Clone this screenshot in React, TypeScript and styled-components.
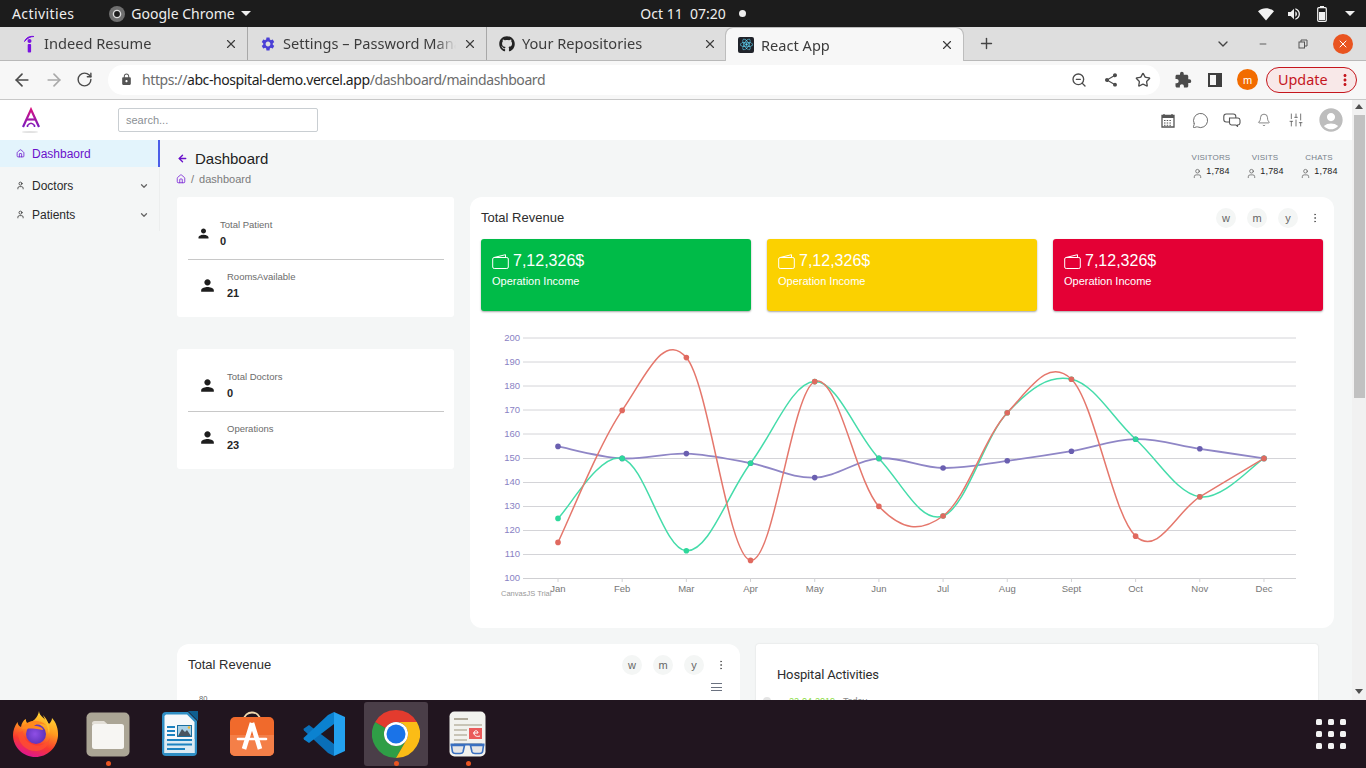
import React from "react";
import styled, { createGlobalStyle } from "styled-components";
import { ArrowLeft, ArrowRight, Bell, ChevronDown, Home, MessageCircle, Minus, MoreVertical, Plus, RotateCw, SlidersVertical, Star, User, X, ZoomOut } from "lucide-react";
import { FaGithub, FaReact } from "react-icons/fa";
import { MdAccountCircle, MdExtension, MdLock, MdMoreVert, MdPerson, MdSettings, MdShare, MdVolumeUp } from "react-icons/md";

const GlobalStyle = createGlobalStyle`
  html, body { margin: 0; padding: 0; height: 100%; overflow: hidden; }
  body { font-family: "Liberation Sans", Arial, sans-serif; color: #222; }
  * { box-sizing: border-box; }
`;

const Screen = styled.div`
  width: 1366px;
  height: 768px;
  display: flex;
  flex-direction: column;
  overflow: hidden;
`;

/* ---------- gnome top bar ---------- */
const TopBar = styled.div`
  height: 27px;
  flex: none;
  background: #1c1c1c;
  color: #eee;
  font-family: "Noto Sans", sans-serif;
  font-size: 14px;
  display: grid;
  grid-template-columns: 1fr auto 1fr;
  align-items: center;
  padding: 0 2px 0 12px;
`;
const BarLeft = styled.div`
  display: flex;
  align-items: center;
`;
const ActivitiesLabel = styled.span`
  letter-spacing: 0.4px;
`;
const AppMenu = styled.div`
  display: flex;
  align-items: center;
  gap: 6px;
  margin-left: 35px;
`;
const Clock = styled.div`
  display: flex;
  align-items: center;
  gap: 13px;
  margin-left: 10px;
`;
const ClockDot = styled.span`
  width: 7px;
  height: 7px;
  border-radius: 50%;
  background: #eee;
`;
const BarRight = styled.div`
  display: flex;
  align-items: center;
  justify-content: flex-end;
`;
const TraySlot = styled.span`
  width: 28px;
  display: flex;
  justify-content: center;
`;
const Caret = styled.span`
  width: 0;
  height: 0;
  border-left: 5px solid transparent;
  border-right: 5px solid transparent;
  border-top: 5px solid #eee;
`;

/* ---------- chrome ---------- */
const TabStrip = styled.div`
  height: 34px;
  flex: none;
  background: #dedede;
  display: flex;
  align-items: stretch;
  padding-left: 9px;
  font-family: "Noto Sans", sans-serif;
  font-size: 14.6px;
  color: #3c3c3c;
  border-bottom: 1px solid #b9b9b9;
`;
const Tab = styled.div<{ $active?: boolean; $divided?: boolean }>`
  width: 239px;
  height: ${(p) => (p.$active ? "34px" : "33px")};
  margin-left: ${(p) => (p.$active ? "-1px" : "0")};
  display: flex;
  align-items: center;
  padding: 0 9px 0 12px;
  gap: 7px;
  background: ${(p) => (p.$active ? "#f7f7f7" : "transparent")};
  border-radius: ${(p) => (p.$active ? "8px 8px 0 0" : "0")};
  border: ${(p) => (p.$active ? "1px solid #bdbdbd" : "none")};
  border-bottom: none;
  border-right: ${(p) => (p.$active ? "1px solid #bdbdbd" : p.$divided ? "1px solid #a8a8a8" : "none")};
  background-clip: padding-box;
`;
const TabIcon = styled.span`
  width: 16px;
  height: 16px;
  flex: none;
  display: flex;
  align-items: center;
  justify-content: center;
`;
const TabTitle = styled.span<{ $raised?: boolean }>`
  flex: 1;
  margin-top: ${(p) => (p.$raised ? "-2px" : "0")};
  white-space: nowrap;
  overflow: hidden;
  -webkit-mask-image: linear-gradient(to right, #000 88%, transparent);
  mask-image: linear-gradient(to right, #000 88%, transparent);
`;
const ReactBadge = styled.span`
  width: 16px;
  height: 16px;
  background: #20232a;
  border-radius: 2px;
  color: #61dafb;
  display: flex;
  align-items: center;
  justify-content: center;
`;
const WindowButtons = styled.div`
  flex: 1;
  display: flex;
  align-items: center;
  color: #444;
  padding: 0 3px 0 14px;
`;
const Spread = styled.span`
  flex: 1;
`;
const WinSlot = styled.span`
  width: 40px;
  display: flex;
  justify-content: center;
  align-items: center;
`;
const CloseCircle = styled.span`
  width: 20px;
  height: 20px;
  border-radius: 50%;
  background: #e95420;
  color: #fff;
  display: flex;
  align-items: center;
  justify-content: center;
`;
const Toolbar = styled.div`
  height: 39px;
  flex: none;
  background: #f7f7f7;
  border-bottom: 1px solid #c8c8c8;
  display: flex;
  align-items: center;
  padding: 0 9px 1px 12px;
  color: #4b4b4b;
`;
const NavButton = styled.span<{ $faded?: boolean }>`
  width: 32px;
  height: 24px;
  flex: none;
  display: flex;
  align-items: center;
  justify-content: flex-start;
  color: ${(p) => (p.$faded ? "#a9a9a9" : "#4b4b4b")};
`;
const Omnibox = styled.div`
  width: 1052px;
  height: 30px;
  margin-right: 7px;
  flex: none;
  border-radius: 15px;
  background: #fff;
  display: flex;
  align-items: center;
  padding: 0 1px 0 12px;
  font-family: "Noto Sans", sans-serif;
  font-size: 14px;
  letter-spacing: -0.41px;
  color: #6c6c6c;
`;
const Url = styled.span`
  margin-left: 9px;
  flex: 1;
  b {
    font-weight: 400;
    color: #1d1d1d;
  }
`;
const OmniIcon = styled.span`
  width: 32px;
  display: flex;
  justify-content: center;
  color: #4b4b4b;
`;
const Avatar = styled.span`
  width: 21px;
  height: 21px;
  border-radius: 50%;
  background: #f26c00;
  color: #fff;
  font-size: 11px;
  display: flex;
  align-items: center;
  justify-content: center;
  margin: 0 8px 0 6px;
`;
const UpdatePill = styled.span`
  width: 91px;
  height: 26px;
  flex: none;
  border: 1px solid #c5161d;
  border-radius: 13px;
  background: #f8e8e8;
  color: #c5161d;
  font-family: "Noto Sans", sans-serif;
  font-size: 14.4px;
  display: flex;
  align-items: center;
  padding: 0 2px 0 11px;
  justify-content: space-between;
`;

/* ---------- page ---------- */
const Viewport = styled.div`
  flex: 1;
  min-height: 0;
  display: flex;
`;
const Page = styled.div`
  flex: 1;
  min-width: 0;
  display: flex;
  flex-direction: column;
  background: #f4f6f6;
`;
const AppHeader = styled.div`
  height: 40px;
  flex: none;
  background: #fff;
  display: flex;
  align-items: center;
  padding: 0 5px 0 20px;
`;
const LogoBox = styled.span`
  width: 22px;
  height: 34px;
  margin-top: 8px;
  flex: none;
`;
const SearchInput = styled.input`
  width: 200px;
  height: 24px;
  margin: 0 0 0 76px;
  padding: 0 7px;
  border: 1px solid #c9ced2;
  border-radius: 2px;
  font-family: "Liberation Sans", sans-serif;
  font-size: 11px;
  outline: none;
  &::placeholder {
    color: #8a8f94;
  }
`;
const HeaderIcon = styled.span<{ $gap?: number }>`
  width: 32px;
  margin-left: ${(p) => p.$gap ?? 0}px;
  display: flex;
  justify-content: center;
  color: #555;
`;
const Body = styled.div`
  flex: 1;
  min-height: 0;
  display: flex;
`;
const Sidebar = styled.nav`
  width: 160px;
  flex: none;
  align-self: flex-start;
  height: 91px;
  border-right: 1px solid #eceeee;
`;
const MenuItem = styled.div<{ $active?: boolean }>`
  height: ${(p) => (p.$active ? "27px" : "29px")};
  margin-bottom: ${(p) => (p.$active ? "4px" : "0")};
  margin-right: -1px;
  display: flex;
  align-items: center;
  gap: 7px;
  padding: 0 11px 0 16px;
  font-size: 12px;
  color: ${(p) => (p.$active ? "#6a11cb" : "#2a2a2a")};
  background: ${(p) => (p.$active ? "#e3f4fc" : "transparent")};
  border-right: ${(p) => (p.$active ? "2px solid #4a5ee8" : "none")};
`;
const MenuLabel = styled.span`
  flex: 1;
`;
const Main = styled.main`
  flex: 1;
  min-width: 0;
  overflow: hidden;
  padding: 0 18px 0 17px;
`;
const TitleRow = styled.div`
  height: 57px;
  display: flex;
  justify-content: space-between;
  padding-top: 9px;
`;
const TitleLine = styled.div`
  display: flex;
  align-items: center;
  gap: 7px;
  font-size: 15px;
  height: 18px;
  color: #222;
`;
const Crumbs = styled.div`
  display: flex;
  align-items: center;
  gap: 5px;
  margin-top: 6px;
  font-size: 11px;
  color: #7b7b7b;
  margin-left: -1px;
`;
const Stats = styled.div`
  display: flex;
  margin-right: -12px;
`;
const Stat = styled.div`
  width: 54px;
  display: flex;
  flex-direction: column;
  align-items: center;
  font-size: 8px;
  letter-spacing: 0.2px;
  color: #77808a;
  padding-top: 4px;
`;
const StatValue = styled.div`
  display: flex;
  align-items: flex-start;
  gap: 3px;
  margin-top: 4px;
  font-size: 9px;
  color: #222;
  svg {
    margin-top: 2px;
  }
`;
const Columns = styled.div`
  display: flex;
  gap: 16px;
`;
const LeftColumn = styled.div`
  width: 277px;
  flex: none;
  display: flex;
  flex-direction: column;
  gap: 32px;
`;
const StatCard = styled.div`
  height: 120px;
  background: #fff;
  border-radius: 3px;
  padding: 10px 10px 0 11px;
`;
const StatRow = styled.div<{ $divided?: boolean; $indent: number; $gap: number }>`
  height: ${(p) => (p.$divided ? "53px" : "50px")};
  display: flex;
  align-items: center;
  padding-left: ${(p) => p.$indent}px;
  gap: ${(p) => p.$gap}px;
  border-bottom: ${(p) => (p.$divided ? "1px solid #c8c8c8" : "none")};
`;
const StatText = styled.div`
  display: flex;
  flex-direction: column;
  gap: 5px;
`;
const StatLabel = styled.div`
  font-size: 9.5px;
  color: #6b6b6b;
`;
const StatNumber = styled.div`
  font-size: 11px;
  font-weight: 700;
  color: #262626;
`;
const Card = styled.section`
  flex: 1;
  height: 431px;
  background: #fff;
  border-radius: 12px;
  padding: 0 11px;
`;
const CardHeader = styled.div`
  height: 42px;
  display: flex;
  align-items: center;
  font-size: 13px;
  color: #2d2d2d;
`;
const CardTitle = styled.div`
  flex: 1;
  margin-top: -2px;
`;
const Pills = styled.div`
  display: flex;
  align-items: center;
  gap: 11px;
`;
const Pill = styled.span`
  width: 20px;
  height: 20px;
  border-radius: 50%;
  background: #f4f6f5;
  color: #666;
  font-size: 11px;
  display: flex;
  align-items: center;
  justify-content: center;
`;
const Dots = styled.span`
  width: 20px;
  margin-left: 7px;
  margin-right: -2px;
  display: flex;
  justify-content: center;
  color: #555;
`;
const Tiles = styled.div`
  display: grid;
  grid-template-columns: repeat(3, 270px);
  gap: 16px;
`;
const Tile = styled.div<{ $bg: string }>`
  height: 72px;
  border-radius: 3px;
  background: ${(p) => p.$bg};
  box-shadow: 0 1px 2px rgba(0, 0, 0, 0.35);
  color: #fff;
  padding: 12px 11px;
`;
const TileValue = styled.div`
  display: flex;
  align-items: center;
  gap: 4px;
  font-size: 16px;
  height: 20px;
`;
const TileLabel = styled.div`
  margin-top: 4px;
  font-size: 11px;
`;
const ChartBox = styled.div`
  height: 270px;
  margin-top: 19px;
`;
const BottomRow = styled.div`
  display: flex;
  gap: 16px;
  margin-top: 16px;
`;
const RevenueCard = styled.section`
  width: 563px;
  height: 200px;
  flex: none;
  background: #fff;
  border-radius: 12px;
  padding: 0 11px;
`;
const SmallChart = styled.div`
  display: flex;
  justify-content: space-between;
  align-items: flex-start;
  padding: 0 7px 0 11px;
  font-size: 7.5px;
  color: #666;
  height: 30px;
`;
const Burger = styled.span`
  width: 11px;
  height: 8px;
  margin-top: -3px;
  border-top: 1px solid #6b7280;
  border-bottom: 1px solid #6b7280;
  position: relative;
  &::after {
    content: "";
    position: absolute;
    left: 0;
    right: 0;
    top: 2.5px;
    height: 1px;
    background: #6b7280;
  }
`;
const ScaleTop = styled.span`
  margin-top: 8px;
`;
const ActivityCard = styled.section`
  width: 562px;
  height: 200px;
  flex: none;
  background: #fff;
  border-radius: 3px;
  box-shadow: 0 0 2px rgba(0, 0, 0, 0.12);
  padding: 23px 21px;
`;
const ActivityTitle = styled.div`
  font-family: Roboto, sans-serif;
  font-size: 13px;
  letter-spacing: -0.15px;
  color: #2d2d2d;
`;
const TimelineRow = styled.div`
  display: flex;
  align-items: center;
  gap: 18px;
  margin: 14px 0 0 -14px;
`;
const TimelineDot = styled.span`
  width: 8px;
  height: 8px;
  margin-top: -1px;
  border-radius: 50%;
  background: #e3e3e3;
`;
const TimelineDate = styled.span`
  font-size: 9px;
  color: #8bdc3f;
`;
const TimelineDay = styled.span`
  color: #888;
`;
const Scrollbar = styled.div`
  width: 14px;
  flex: none;
  background: #f1f1f1;
  display: flex;
  flex-direction: column;
  align-items: center;
  padding-top: 4px;
`;
const ScrollArrow = styled.span<{ $down?: boolean }>`
  width: 0;
  height: 0;
  border-left: 4px solid transparent;
  border-right: 4px solid transparent;
  border-${(p) => (p.$down ? "top" : "bottom")}: 5px solid #505050;
  margin-top: ${(p) => (p.$down ? "auto" : "0")};
  margin-bottom: ${(p) => (p.$down ? "6px" : "0")};
`;
const ScrollThumb = styled.div`
  width: 11px;
  height: 283px;
  margin-top: 6px;
  background: #c1c1c1;
`;

/* ---------- dock ---------- */
const Dock = styled.div`
  height: 68px;
  flex: none;
  background: #21151f;
  display: flex;
  align-items: center;
  gap: 8px;
  padding: 0 20px 0 4px;
`;
const DockItem = styled.div<{ $active?: boolean; $running?: boolean }>`
  width: 64px;
  height: 64px;
  border-radius: 3px;
  background: ${(p) => (p.$active ? "#4a3e48" : "transparent")};
  display: flex;
  align-items: center;
  justify-content: center;
  position: relative;
  &::after {
    content: "";
    display: ${(p) => (p.$running ? "block" : "none")};
    position: absolute;
    left: 29.5px;
    bottom: 0;
    width: 5px;
    height: 5px;
    border-radius: 50%;
    background: #e95420;
  }
`;
const AppGrid = styled.div`
  margin-left: auto;
  display: grid;
  grid-template-columns: repeat(3, 6px);
  gap: 6px;
`;
const AppDot = styled.span`
  width: 6px;
  height: 6px;
  border-radius: 1.5px;
  background: #f2f2f2;
`;

/* ---------- chart ---------- */
const months = ["Jan", "Feb", "Mar", "Apr", "May", "Jun", "Jul", "Aug", "Sept", "Oct", "Nov", "Dec"];
const series = [
  { line: "#8f86c6", dot: "#6a5fb0", width: 1.8, data: [155, 150, 152, 148, 142, 150, 146, 149, 153, 158, 154, 150] },
  { line: "#45dcaa", dot: "#2ed89b", width: 1.5, data: [125, 150, 111.5, 148, 182, 150, 126, 169, 183, 158, 134, 150] },
  { line: "#e5776c", dot: "#e0695f", width: 1.5, data: [115, 170, 192, 107.5, 182, 130, 126, 169, 183, 117.6, 134, 150] },
];
const px = (i: number) => 558 + i * 64.18;
const py = (v: number) => 578 - (v - 100) * 2.4;

function splinePath(data: number[]) {
  const pts = data.map((v, i) => [px(i), py(v) + 0.4]);
  const t = 5.6;
  let d = `M${pts[0][0]} ${pts[0][1]}`;
  for (let i = 0; i < pts.length - 1; i++) {
    const a = pts[Math.max(i - 1, 0)];
    const b = pts[i];
    const c = pts[i + 1];
    const e = pts[Math.min(i + 2, pts.length - 1)];
    const c1x = b[0] + (c[0] - a[0]) / t;
    const c1y = b[1] + (c[1] - a[1]) / t;
    const c2x = c[0] - (e[0] - b[0]) / t;
    const c2y = c[1] - (e[1] - b[1]) / t;
    d += ` C${c1x} ${c1y} ${c2x} ${c2y} ${c[0]} ${c[1]}`;
  }
  return d;
}

function RevenueChart() {
  const ticks = [200, 190, 180, 170, 160, 150, 140, 130, 120, 110];
  return (
    <svg width="842" height="270" viewBox="481 330 842 270" fontFamily="Liberation Sans, sans-serif">
      {ticks.map((v) => (
        <g key={v}>
          <line x1="523" x2="1296" y1={v > 150 ? py(v) : py(v) + 0.5} y2={v > 150 ? py(v) : py(v) + 0.5} stroke="#d4d4d8" />
          <text x="520" y={py(v) + 3} textAnchor="end" fontSize="9.5" fill="#8a82c4">{v}</text>
        </g>
      ))}
      <line x1="523" x2="1296" y1="578.5" y2="578.5" stroke="#cfcfd2" />
      <text x="520" y="581" textAnchor="end" fontSize="9.5" fill="#8a82c4">100</text>
      {months.map((m, i) => (
        <g key={m}>
          <line x1={px(i)} x2={px(i)} y1="578" y2="582" stroke="#d2d2d4" />
          <text x={px(i)} y="592" textAnchor="middle" fontSize="9.5" fill="#777">{m}</text>
        </g>
      ))}
      <text x="501" y="596" fontSize="7.5" fill="#999">CanvasJS Trial</text>
      {series.map((s) => (
        <path key={s.line} d={splinePath(s.data)} fill="none" stroke={s.line} strokeWidth={s.width} />
      ))}
      {series.map((s) =>
        s.data.map((v, i) => <circle key={s.dot + i} cx={px(i)} cy={py(v) + 0.4} r="2.8" fill={s.dot} />)
      )}
    </svg>
  );
}

/* ---------- drawn icons ---------- */
function IndeedIcon() {
  return (
    <svg width="12" height="18" viewBox="0 0 12 18">
      <path d="M1.5 6.5C3 2.5 7 .8 11 1.5 7.5 1.5 4.5 3 1.5 6.5Z" fill="#7a12e0" stroke="#7a12e0" strokeWidth="1" />
      <circle cx="6.5" cy="6" r="2" fill="#7a12e0" />
      <rect x="4.7" y="9" width="3.4" height="8.5" rx="1" fill="#7a12e0" />
    </svg>
  );
}

function ChromeGlyph({ size }: { size: number }) {
  return (
    <svg width={size} height={size} viewBox="0 0 48 48">
      <path d="M3.2 12A24 24 0 0 0 24 48L34.4 30A12 12 0 0 1 13.6 18Z" fill="#2f9e46" />
      <path d="M44.8 12A24 24 0 0 1 24 48L34.4 30A12 12 0 0 0 24 12H44.8Z" fill="#fbbc16" />
      <path d="M24 0A24 24 0 0 1 44.8 12H24A12 12 0 0 0 13.6 18L3.2 12A24 24 0 0 1 24 0Z" fill="#e33b2e" />
      <circle cx="24" cy="24" r="12" fill="#fff" />
      <circle cx="24" cy="24" r="9.5" fill="#1a73e8" />
    </svg>
  );
}

function GreyChrome() {
  return (
    <svg width="16" height="16" viewBox="0 0 16 16">
      <circle cx="8" cy="8" r="8" fill="#6f6f6f" />
      <circle cx="8" cy="8" r="3.6" fill="#1c1c1c" stroke="#dcdcdc" strokeWidth="1.4" />
    </svg>
  );
}

function Wifi() {
  return (
    <svg width="16" height="14" viewBox="0 0 16 14">
      <path d="M0 4.2C4.5 .2 11.5 .2 16 4.2L8 13.5Z" fill="#f2f2f2" />
    </svg>
  );
}

function Battery() {
  return (
    <svg width="10" height="16" viewBox="0 0 10 16">
      <rect x="3" y="0" width="4" height="2" fill="#f2f2f2" />
      <rect x="0.7" y="1.7" width="8.6" height="13.6" rx="1" fill="none" stroke="#f2f2f2" strokeWidth="1.2" />
      <rect x="2" y="6" width="6" height="8" fill="#f2f2f2" />
    </svg>
  );
}

function RestoreIcon() {
  return (
    <svg width="10" height="10" viewBox="0 0 10 10" fill="none" stroke="#555">
      <rect x="1" y="3" width="5.5" height="6" />
      <path d="M3 3V1H9V7H6.5" />
    </svg>
  );
}

function PanelIcon() {
  return (
    <svg width="16" height="16" viewBox="0 0 16 16">
      <path d="M1 1H15V15H1ZM3 3V13H9V3Z" fill="#3f3f3f" fillRule="evenodd" />
    </svg>
  );
}

function AppLogo() {
  return (
    <svg width="22" height="34" viewBox="0 0 22 34">
      <defs>
        <linearGradient id="logoGrad" x1="0" y1="0" x2="0" y2="20" gradientUnits="userSpaceOnUse">
          <stop offset="0" stopColor="#e0107a" />
          <stop offset="1" stopColor="#7a1cc0" />
        </linearGradient>
      </defs>
      <g fill="none" stroke="url(#logoGrad)" strokeWidth="2.2">
        <path d="M3 20L11 2.5 19 20" />
        <path d="M6.5 12.5H15.5" />
        <path d="M7.5 20V18.5Q11 14 14.5 18.5V20" strokeWidth="1.6" />
      </g>
      <ellipse cx="10" cy="25" rx="8" ry="1" fill="#e2e2e2" />
    </svg>
  );
}

function CalendarIcon() {
  return (
    <svg width="14" height="15" viewBox="0 0 14 15">
      <path d="M1 2.5H13V14H1Z" fill="none" stroke="#555" strokeWidth="1.3" />
      <rect x="1" y="2" width="12" height="3" fill="#555" />
      <path d="M3 1V3M11 1V3" stroke="#555" strokeWidth="1.3" />
      <path d="M3 7.5H11M3 10H11M3 12.3H11" stroke="#555" strokeDasharray="1.5 1.2" />
    </svg>
  );
}

function ChatsIcon() {
  return (
    <svg width="18" height="14" viewBox="0 0 18 14" fill="none" stroke="#555" strokeWidth="1.1">
      <rect x="0.8" y="1" width="12" height="8" rx="2.5" />
      <path d="M6.5 5H15A2.2 2.2 0 0 1 17 7.2V10A2.2 2.2 0 0 1 15 12H14.5V13.3L13 12H8.5A2.2 2.2 0 0 1 6.5 10Z" fill="#fff" />
    </svg>
  );
}

function WalletIcon() {
  return (
    <svg width="17" height="15" viewBox="0 0 17 15" fill="none" stroke="#fff" strokeWidth="1">
      <rect x="0.7" y="3.5" width="15.6" height="11" rx="1.5" />
      <path d="M2 3.5L13.5 .7V3.5" />
    </svg>
  );
}

function FirefoxIcon() {
  return (
    <svg width="46" height="46" viewBox="0 0 46 46">
      <defs>
        <linearGradient id="ffBody" x1="0.75" y1="0" x2="0.4" y2="1">
          <stop offset="0" stopColor="#ffe03a" />
          <stop offset="0.4" stopColor="#ff9a1f" />
          <stop offset="0.72" stopColor="#f8392f" />
          <stop offset="1" stopColor="#e0168f" />
        </linearGradient>
        <radialGradient id="ffCore" cx="0.45" cy="0.5" r="0.6">
          <stop offset="0" stopColor="#8f4fe6" />
          <stop offset="1" stopColor="#5a2fb4" />
        </radialGradient>
      </defs>
      <path d="M26 0C26 5 33 8 36 13 38 11 39 9 39 7 43 11 45.5 18 45 25 44 37 34 46 22.5 46 10 46 0 36 0 24 0 20 1.5 15 4.5 11 5 14 6 15 8 16 8.5 12 10.5 9 13 8 12.5 10 14 12 15 13 19 11 25 7 26 0Z" fill="url(#ffBody)" />
      <circle cx="23" cy="23" r="10" fill="url(#ffCore)" />
      <path d="M9 18C13 9 25 7 33 14 27 12 23 13 21 15 27 15 30 17 30 19 25 18 17 17 9 18Z" fill="#ff8a1e" />
      <path d="M5 22C5 33 14 41 24 40 31 39 36 35 37 27 34 33 27 36 21 34 14 32 10 27 10 20Z" fill="#ff5030" opacity="0.75" />
      <path d="M30 4C34 8 38 15 36 23 35 17 33 11 30 4Z" fill="#ffc22e" />
    </svg>
  );
}

function FilesIcon() {
  return (
    <svg width="44" height="45" viewBox="0 0 44 45">
      <rect x="0.5" y="0.5" width="43" height="44" rx="5" fill="#aba595" />
      <path d="M6 14V11.5A2.5 2.5 0 0 1 8.5 9H18L22 12.5H6Z" fill="#e4e0d8" />
      <rect x="6" y="12" width="32" height="25" rx="2.5" fill="#f7f6f3" />
    </svg>
  );
}

function WriterIcon() {
  return (
    <svg width="38" height="46" viewBox="0 0 38 46">
      <path d="M5 1H27L36 10V41A4 4 0 0 1 32 45H5A4 4 0 0 1 1 41V5A4 4 0 0 1 5 1Z" fill="#2f8ec4" />
      <path d="M27 0H37V10Z" fill="#0f5e8e" />
      <path d="M5 3.5H26L33.5 11V42H3.5V5Z" fill="#f6f8fa" />
      <path d="M3.5 28H33.5V42H3.5Z" fill="#dceaf3" />
      <path d="M6 16H14M6 20H14M6 24H14M6 29H31M6 33.5H31M6 38H24" stroke="#1c82c0" strokeWidth="2" />
      <rect x="16" y="14" width="15" height="12" fill="#1c6f9f" />
      <rect x="17" y="15" width="13" height="10" fill="#a8d0e6" />
      <path d="M17 25L21 18 24 21 26 19 30 25Z" fill="#4a5560" />
      <circle cx="28" cy="16.5" r="1.3" fill="#f2b632" />
    </svg>
  );
}

function StoreIcon() {
  return (
    <svg width="46" height="46" viewBox="0 0 46 46">
      <path d="M15 9C15 -1 31 -1 31 9" fill="none" stroke="#f0d9b0" strokeWidth="1.8" />
      <rect x="1" y="6" width="44" height="39" rx="5" fill="#f06a2c" />
      <path d="M1 24H45V40A5 5 0 0 1 40 45H6A5 5 0 0 1 1 40Z" fill="#f47f48" />
      <path d="M23 12L15 38M23 12L31 38" stroke="#fff" strokeWidth="4.6" fill="none" />
      <path d="M9 28H37" stroke="#fff" strokeWidth="2.6" strokeLinecap="round" />
    </svg>
  );
}

function VscodeIcon() {
  return (
    <svg width="42" height="44" viewBox="0 0 42 44">
      <path d="M31 44L31 32 6 13 1 16.5Q0 17.5 1 18.5L25 41Z" fill="#0a6fb8" />
      <path d="M31 0L31 12 6 31 1 27.5Q0 26.5 1 25.5L25 3Z" fill="#0b82d0" />
      <path d="M31 0L42 5V39L31 44Z" fill="#23a1ef" />
    </svg>
  );
}

function ReaderIcon() {
  return (
    <svg width="38" height="46" viewBox="0 0 38 46">
      <rect x="0.5" y="0.5" width="36" height="45" rx="5" fill="#f2f2ee" />
      <path d="M5 8H19" stroke="#b0aa9a" strokeWidth="2" />
      <path d="M5 14H33M5 19H18M5 24H18M5 29H18M5 33H33" stroke="#c8c4b6" strokeWidth="1.8" />
      <rect x="20" y="17" width="13" height="11" fill="#ea5a5a" />
      <path d="M24 22H29C29 19 25 19 25 22 25 25 28 26 31 25" stroke="#fff" fill="none" />
      <path d="M1.5 33.5H35.5" stroke="#3a70c0" strokeWidth="2" />
      <path d="M2.5 34.5H15.5L14 41Q13.5 42.5 11 42.5H6.5Q4 42.5 3.5 41Z" fill="#e6e6e6" stroke="#3a70c0" strokeWidth="1.6" />
      <path d="M21.5 34.5H34.5L33.5 41Q33 42.5 30.5 42.5H26Q23.5 42.5 23 41Z" fill="#e6e6e6" stroke="#3a70c0" strokeWidth="1.6" />
    </svg>
  );
}

const HeadGlyph = () => <User size={11} strokeWidth={1.5} color="#555" />;

type PersonStatProps = { label: string; value: number; indent: number; gap: number; size: number; divided?: boolean };

function PersonStat({ label, value, indent, gap, size, divided }: PersonStatProps) {
  return (
    <StatRow $indent={indent} $gap={gap} $divided={divided}>
      <MdPerson size={size} color="#1e1e1e" />
      <StatText>
        <StatLabel>{label}</StatLabel>
        <StatNumber>{value}</StatNumber>
      </StatText>
    </StatRow>
  );
}

export default function App() {
  return (
    <Screen>
      <GlobalStyle />
      <TopBar>
        <BarLeft>
          <ActivitiesLabel>Activities</ActivitiesLabel>
          <AppMenu>
            <GreyChrome />
            Google Chrome
            <Caret />
          </AppMenu>
        </BarLeft>
        <Clock>
          <span>Oct 11&nbsp; 07:20</span>
          <ClockDot />
        </Clock>
        <BarRight>
          <TraySlot><Wifi /></TraySlot>
          <TraySlot><MdVolumeUp size={16} /></TraySlot>
          <TraySlot><Battery /></TraySlot>
          <TraySlot><Caret /></TraySlot>
        </BarRight>
      </TopBar>

      <TabStrip>
        <Tab $divided>
          <TabIcon><IndeedIcon /></TabIcon>
          <TabTitle $raised>Indeed Resume</TabTitle>
          <X size={14} />
        </Tab>
        <Tab $divided>
          <TabIcon><MdSettings size={16} color="#4a3fd6" /></TabIcon>
          <TabTitle $raised>Settings – Password Manager</TabTitle>
          <X size={14} />
        </Tab>
        <Tab>
          <TabIcon><FaGithub size={16} color="#222" /></TabIcon>
          <TabTitle $raised>Your Repositories</TabTitle>
          <X size={14} />
        </Tab>
        <Tab $active>
          <TabIcon><ReactBadge><FaReact size={13} /></ReactBadge></TabIcon>
          <TabTitle>React App</TabTitle>
          <X size={14} />
        </Tab>
        <WindowButtons>
          <Plus size={17} />
          <Spread />
          <WinSlot><ChevronDown size={16} /></WinSlot>
          <WinSlot><Minus size={10} /></WinSlot>
          <WinSlot><RestoreIcon /></WinSlot>
          <WinSlot><CloseCircle><X size={12} /></CloseCircle></WinSlot>
        </WindowButtons>
      </TabStrip>

      <Toolbar>
        <NavButton><ArrowLeft size={20} /></NavButton>
        <NavButton $faded><ArrowRight size={20} /></NavButton>
        <NavButton><RotateCw size={17} /></NavButton>
        <Omnibox>
          <MdLock size={13} color="#555" />
          <Url>https://<b>abc-hospital-demo.vercel.app</b>/dashboard/maindashboard</Url>
          <OmniIcon><ZoomOut size={16} /></OmniIcon>
          <OmniIcon><MdShare size={16} /></OmniIcon>
          <OmniIcon><Star size={16} /></OmniIcon>
        </Omnibox>
        <OmniIcon><MdExtension size={18} /></OmniIcon>
        <OmniIcon><PanelIcon /></OmniIcon>
        <Avatar>m</Avatar>
        <UpdatePill>Update <MdMoreVert size={18} /></UpdatePill>
      </Toolbar>

      <Viewport>
        <Page>
          <AppHeader>
            <LogoBox><AppLogo /></LogoBox>
            <SearchInput placeholder="search..." />
            <Spread />
            <HeaderIcon><CalendarIcon /></HeaderIcon>
            <HeaderIcon><MessageCircle size={17} strokeWidth={1.2} /></HeaderIcon>
            <HeaderIcon><ChatsIcon /></HeaderIcon>
            <HeaderIcon><Bell size={14} strokeWidth={1.2} /></HeaderIcon>
            <HeaderIcon><SlidersVertical size={16} strokeWidth={1.2} /></HeaderIcon>
            <HeaderIcon $gap={3}><MdAccountCircle size={28} color="#bdbdbd" /></HeaderIcon>
          </AppHeader>
          <Body>
            <Sidebar>
              <MenuItem $active>
                <Home size={9} />
                <MenuLabel>Dashbaord</MenuLabel>
              </MenuItem>
              <MenuItem>
                <User size={9} />
                <MenuLabel>Doctors</MenuLabel>
                <ChevronDown size={10} color="#666" strokeWidth={3} />
              </MenuItem>
              <MenuItem>
                <User size={9} />
                <MenuLabel>Patients</MenuLabel>
                <ChevronDown size={10} color="#666" strokeWidth={3} />
              </MenuItem>
            </Sidebar>
            <Main>
              <TitleRow>
                <div>
                  <TitleLine>
                    <ArrowLeft size={11} color="#6a11cb" strokeWidth={3} />
                    Dashboard
                  </TitleLine>
                  <Crumbs>
                    <Home size={10} color="#7a22d6" />
                    <span>/</span>
                    <span>dashboard</span>
                  </Crumbs>
                </div>
                <Stats>
                  {["VISITORS", "VISITS", "CHATS"].map((s) => (
                    <Stat key={s}>
                      {s}
                      <StatValue><HeadGlyph />1,784</StatValue>
                    </Stat>
                  ))}
                </Stats>
              </TitleRow>
              <Columns>
                <LeftColumn>
                  <StatCard>
                    <PersonStat label="Total Patient" value={0} indent={8} gap={9} size={15} divided />
                    <PersonStat label="RoomsAvailable" value={21} indent={10} gap={10} size={19} />
                  </StatCard>
                  <StatCard>
                    <PersonStat label="Total Doctors" value={0} indent={10} gap={10} size={19} divided />
                    <PersonStat label="Operations" value={23} indent={10} gap={10} size={19} />
                  </StatCard>
                </LeftColumn>
                <Card>
                  <CardHeader>
                    <CardTitle>Total Revenue</CardTitle>
                    <Pills>
                      <Pill>w</Pill>
                      <Pill>m</Pill>
                      <Pill>y</Pill>
                    </Pills>
                    <Dots><MoreVertical size={12} strokeWidth={1.6} /></Dots>
                  </CardHeader>
                  <Tiles>
                    {["#00bb48", "#fbd100", "#e40035"].map((c) => (
                      <Tile key={c} $bg={c}>
                        <TileValue><WalletIcon />7,12,326$</TileValue>
                        <TileLabel>Operation Income</TileLabel>
                      </Tile>
                    ))}
                  </Tiles>
                  <ChartBox><RevenueChart /></ChartBox>
                </Card>
              </Columns>
              <BottomRow>
                <RevenueCard>
                  <CardHeader>
                    <CardTitle>Total Revenue</CardTitle>
                    <Pills>
                      <Pill>w</Pill>
                      <Pill>m</Pill>
                      <Pill>y</Pill>
                    </Pills>
                    <Dots><MoreVertical size={12} strokeWidth={1.6} /></Dots>
                  </CardHeader>
                  <SmallChart>
                    <ScaleTop>80</ScaleTop>
                    <Burger />
                  </SmallChart>
                </RevenueCard>
                <ActivityCard>
                  <ActivityTitle>Hospital Activities</ActivityTitle>
                  <TimelineRow>
                    <TimelineDot />
                    <TimelineDate>22-04-2019 - <TimelineDay>Today</TimelineDay></TimelineDate>
                  </TimelineRow>
                </ActivityCard>
              </BottomRow>
            </Main>
          </Body>
        </Page>
        <Scrollbar>
          <ScrollArrow />
          <ScrollThumb />
          <ScrollArrow $down />
        </Scrollbar>
      </Viewport>

      <Dock>
        <DockItem><FirefoxIcon /></DockItem>
        <DockItem $running><FilesIcon /></DockItem>
        <DockItem><WriterIcon /></DockItem>
        <DockItem><StoreIcon /></DockItem>
        <DockItem><VscodeIcon /></DockItem>
        <DockItem $active $running><ChromeGlyph size={48} /></DockItem>
        <DockItem $running><ReaderIcon /></DockItem>
        <AppGrid>
          {Array.from({ length: 9 }, (_, i) => <AppDot key={i} />)}
        </AppGrid>
      </Dock>
    </Screen>
  );
}
